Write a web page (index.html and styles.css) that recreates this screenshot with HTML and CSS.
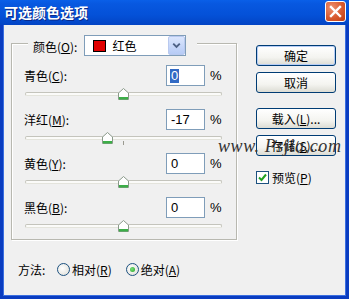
FILE: index.html
```html
<!DOCTYPE html>
<html>
<head>
<meta charset="utf-8">
<link rel="stylesheet" href="styles.css">
</head>
<body>
<div class="window">
  <div class="titlebar">
    <span class="title">可选颜色选项</span>
    <span class="close">
      <svg width="21" height="21" viewBox="0 0 21 21"><path d="M6 6 L15 15 M15 6 L6 15" stroke="#fff" stroke-width="2.4" stroke-linecap="square"/></svg>
    </span>
  </div>
  <div class="client">
    <div class="main">
      <div class="group">
        <div class="legend">
          <span class="lbl">颜色(<u>O</u>):</span>
          <div class="select">
            <span class="swatch"></span>
            <span class="seltext">红色</span>
            <span class="arrow"><svg width="16" height="19" viewBox="0 0 16 19"><path d="M4.5 7.5 L8 11 L11.5 7.5" fill="none" stroke="#4d6185" stroke-width="2"/></svg></span>
          </div>
        </div>
        <div class="channel">
          <div class="row"><span class="clabel">青色(<u>C</u>):</span><span class="input"><span class="sel">0</span></span><span class="pct">%</span></div>
          <div class="slider"><div class="track"></div><svg class="thumb" style="left:93px" width="11" height="12" viewBox="0 0 11 12"><path d="M0.5 5 L5.5 0.5 L10.5 5 L10.5 11.5 L0.5 11.5 Z" fill="#fff" stroke="#8a9a8a"/><rect x="1" y="9" width="9" height="2.5" fill="#3cae48"/></svg></div>
        </div>
        <div class="channel">
          <div class="row"><span class="clabel">洋红(<u>M</u>):</span><span class="input">-17</span><span class="pct">%</span></div>
          <div class="slider"><div class="track"></div><span class="tick"></span><svg class="thumb" style="left:77px" width="11" height="12" viewBox="0 0 11 12"><path d="M0.5 5 L5.5 0.5 L10.5 5 L10.5 11.5 L0.5 11.5 Z" fill="#fff" stroke="#8a9a8a"/><rect x="1" y="9" width="9" height="2.5" fill="#3cae48"/></svg></div>
        </div>
        <div class="channel">
          <div class="row"><span class="clabel">黄色(<u>Y</u>):</span><span class="input">0</span><span class="pct">%</span></div>
          <div class="slider"><div class="track"></div><svg class="thumb" style="left:93px" width="11" height="12" viewBox="0 0 11 12"><path d="M0.5 5 L5.5 0.5 L10.5 5 L10.5 11.5 L0.5 11.5 Z" fill="#fff" stroke="#8a9a8a"/><rect x="1" y="9" width="9" height="2.5" fill="#3cae48"/></svg></div>
        </div>
        <div class="channel">
          <div class="row"><span class="clabel">黑色(<u>B</u>):</span><span class="input">0</span><span class="pct">%</span></div>
          <div class="slider"><div class="track"></div><svg class="thumb" style="left:93px" width="11" height="12" viewBox="0 0 11 12"><path d="M0.5 5 L5.5 0.5 L10.5 5 L10.5 11.5 L0.5 11.5 Z" fill="#fff" stroke="#8a9a8a"/><rect x="1" y="9" width="9" height="2.5" fill="#3cae48"/></svg></div>
        </div>
      </div>
      <div class="buttons">
        <button class="btn default">确定</button>
        <button class="btn">取消</button>
        <button class="btn gap">载入(<u>L</u>)...</button>
        <button class="btn">存储(<u>S</u>)...</button>
        <label class="check"><span class="box"><svg width="11" height="11" viewBox="0 0 11 11"><path d="M2 5.5 L4.5 8 L9 2.5" fill="none" stroke="#21a121" stroke-width="2"/></svg></span>预览(<u>P</u>)</label>
      </div>
    </div>
    <div class="method">
      <span class="mlabel">方法:</span>
      <span class="radio"><span class="circle"></span>相对(<u>R</u>)</span>
      <span class="radio"><span class="circle on"></span>绝对(<u>A</u>)</span>
    </div>
    <div class="watermark">www. Psjia.com</div>
  </div>
</div>
</body>
</html>
```

FILE: styles.css
```css
* { box-sizing: border-box; }
html, body { margin: 0; padding: 0; }
body {
  width: 349px; height: 299px; overflow: hidden;
  font-family: "Noto Sans CJK SC", "Noto Sans", sans-serif;
  font-size: 12px; color: #000;
  background: #f0f0f0;
}
u { text-decoration: underline; text-underline-offset: 1px; }
.window { width: 349px; height: 299px; display: flex; flex-direction: column; }
.titlebar {
  height: 25px; flex: none;
  background: linear-gradient(#0a5fe8 0%, #0858e0 15%, #0451d8 60%, #0344c4 100%);
  display: flex; align-items: center; justify-content: space-between;
  padding: 0 3px 0 4px;
}
.title {
  color: #fff; font-weight: bold; font-size: 14px;
  text-shadow: 1px 1px 0 #0a2a8a;
  line-height: 14px; margin-top: -1px;
}
.close {
  width: 21px; height: 21px; border: 1px solid #fff; border-radius: 3px;
  background: radial-gradient(circle at 30% 30%, #ee9070, #d85a30 55%, #c03c10);
  display: flex; align-items: center; justify-content: center; margin-top: -2px;
}
.close svg { display: block; margin: -1px; }
.client {
  flex: 1; position: relative;
  border: 3px solid #0a3cc0; border-top: none;
  box-shadow: inset 1px 0 0 #3a6ee0, inset -1px 0 0 #3a6ee0, inset 0 -1px 0 #3a6ee0;
  background: #f0f0f0;
  padding: 18px 0 0 8px;
}
.main { display: flex; gap: 19px; }
.group {
  width: 226px; height: 197px; flex: none;
  border: 1px solid #b8b8b0;
  box-shadow: inset 1px 1px 0 #fff, 1px 1px 0 #fff;
  padding: 0 12px 0 12px;
}
.legend {
  display: flex; align-items: center; gap: 7px;
  background: #f0f0f0;
  margin: -9px 0 0 4px; padding: 0 7px 0 5px;
  width: 169px; height: 21px;
}
.lbl { line-height: 12px; margin-top: 3px; }
.select {
  width: 102px; height: 21px; border: 1px solid #7f9db9; background: #fff;
  display: flex; align-items: center; padding-left: 8px;
}
.swatch { width: 13px; height: 12px; background: #e00000; border: 1px solid #000; flex: none; }
.seltext { margin-left: 6px; flex: 1; line-height: 12px; }
.arrow {
  width: 17px; height: 19px; flex: none; border: 1px solid #b9c9ef; border-radius: 2px;
  background: linear-gradient(#dbe6fd, #b6cbf6);
  display: flex; align-items: center; justify-content: center;
}
.arrow svg { display: block; }
.channel { height: 44px; }
.legend + .channel { margin-top: 9px; }
.row { height: 21px; display: flex; align-items: center; }
.clabel { flex: 1; line-height: 12px; }
.input {
  width: 39px; height: 21px; border: 1px solid #7f9db9; background: #fff;
  padding-left: 4px; display: flex; align-items: center; line-height: 12px;
  font-family: "Liberation Sans", Arial, sans-serif; font-size: 13px;
}
.sel { background: #316ac5; color: #fff; padding: 0 1px; height: 14px; line-height: 14px; margin-left: -1px; }
.pct { width: 14px; margin-left: 5px; font-family: "Liberation Sans", Arial, sans-serif; font-size: 13px; }
.slider { position: relative; height: 23px; margin-left: 1px; width: 197px; }
.track {
  position: absolute; left: 0; right: 0; top: 6px; height: 4px;
  border: 1px solid #c4c4bc; border-bottom-color: #e4e4dc; border-radius: 2px;
  background: #fbfbf9;
}
.tick { position: absolute; left: 98px; top: 11px; width: 1px; height: 4px; background: #9a9a90; }
.thumb { position: absolute; top: 2px; display: block; }
.buttons { display: flex; flex-direction: column; width: 80px; padding-top: 2px; }
.btn {
  width: 80px; height: 21px; margin: 0 0 6px 0; padding: 0;
  border: 1px solid #003c74; border-radius: 3px;
  background: linear-gradient(#ffffff, #f4f4f0 60%, #dcdcd4);
  font-family: "Noto Sans CJK SC", sans-serif; font-size: 12px; line-height: 12px; color: #000;
}
.btn.default { box-shadow: inset 0 0 0 1px #b6cdf6; }
.btn.gap { margin-top: 9px; }
.check { display: flex; align-items: center; margin-top: 9px; line-height: 12px; }
.box {
  width: 13px; height: 13px; border: 1px solid #1c5180; background: #fff; margin-right: 3px;
  display: flex; align-items: center; justify-content: center;
}
.box svg { display: block; }
.method { display: flex; align-items: center; margin-top: 22px; padding-left: 7px; height: 14px; }
.mlabel { width: 39px; }
.radio { display: flex; align-items: center; margin-right: 14px; }
.circle {
  width: 13px; height: 13px; border-radius: 50%; border: 1px solid #1c5180;
  background: radial-gradient(circle at 40% 40%, #ffffff, #dcdcd4);
  margin-right: 2px; position: relative;
}
.circle.on::after {
  content: ""; position: absolute; left: 3px; top: 3px; width: 5px; height: 5px; border-radius: 50%;
  background: radial-gradient(circle at 40% 40%, #7be07b, #21a121);
}
.watermark {
  position: absolute; left: 215px; top: 111px; white-space: nowrap;
  font-family: "Liberation Serif", "Times New Roman", serif; font-style: italic;
  font-size: 18px; color: #333; letter-spacing: 0.6px;
}
```
